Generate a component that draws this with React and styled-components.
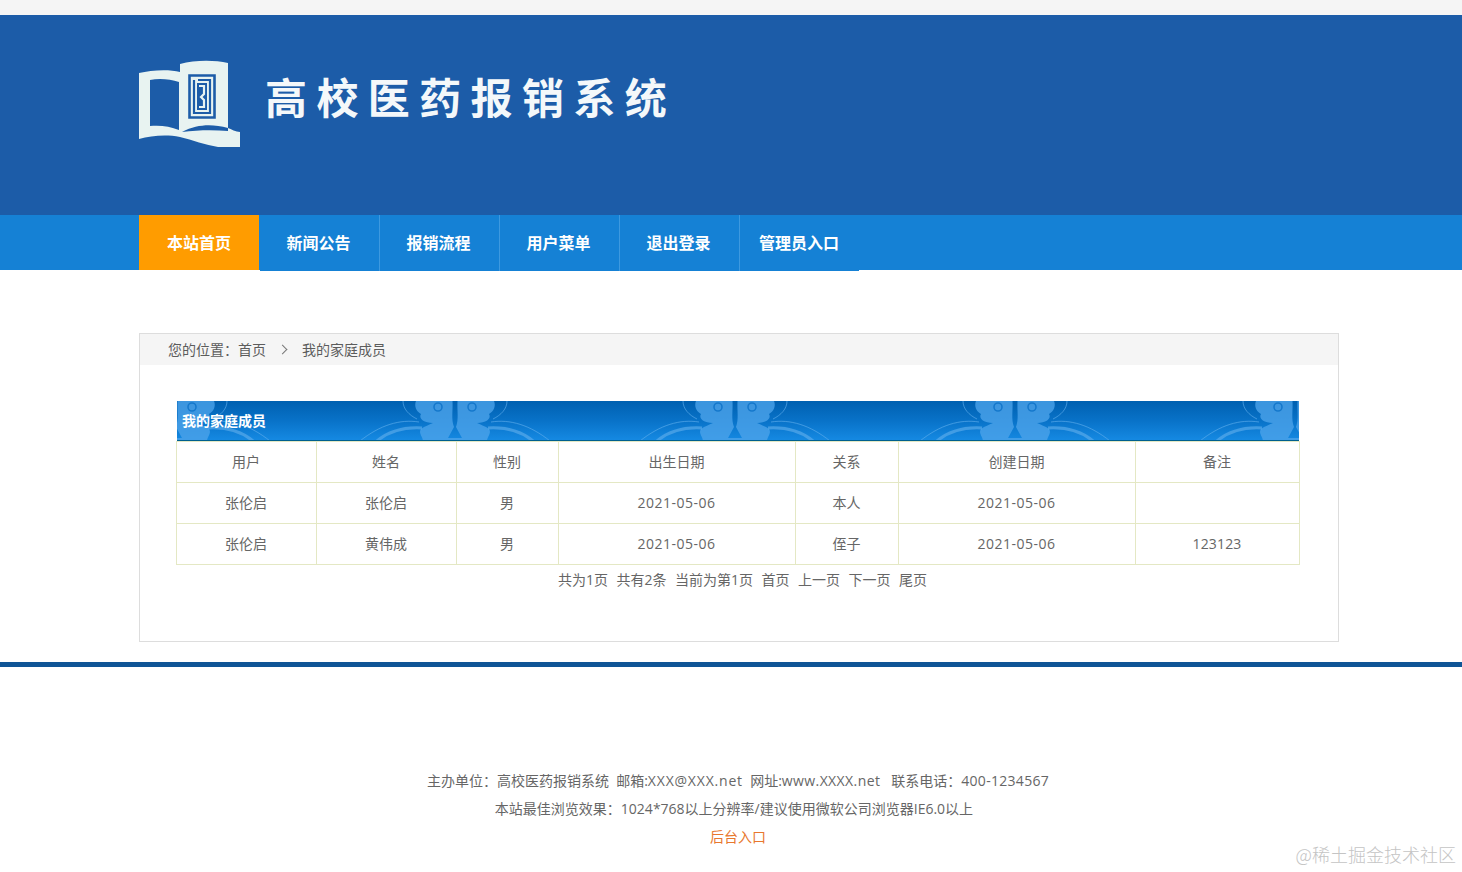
import React from 'react';
import styled, { createGlobalStyle } from 'styled-components';

const GlobalStyle = createGlobalStyle`
  html, body { margin: 0; padding: 0; background: #fff; }
  body {
    font-family: "Open Sans", "Noto Sans CJK SC", sans-serif;
    font-size: 14px;
    color: #666;
  }
`;

const Page = styled.div`
  position: relative;
  height: 872px;
  overflow: hidden;
`;

const TopStrip = styled.div`
  height: 15px;
  background: #f5f5f5;
`;

const Header = styled.header`
  height: 200px;
  background: #1c5ca8;
  padding: 45px 0 0 138px;
  box-sizing: border-box;
  display: flex;
  align-items: flex-start;
`;

const LogoMark = styled.svg`
  width: 102px;
  height: 87px;
  flex: none;
`;

const SiteName = styled.h1`
  margin: 7px 0 0 25px;
  font-family: "Noto Sans CJK SC", sans-serif;
  font-size: 42px;
  line-height: 58px;
  font-weight: 700;
  letter-spacing: 9.4px;
  color: #f4f8fa;
  white-space: nowrap;
`;

const NavBar = styled.nav`
  height: 55px;
  background: #1581d5;
  padding-left: 139px;
  display: flex;
`;

const NavItem = styled.a`
  width: ${(p) => (p.$last ? '119px' : '120px')};
  height: ${(p) => (p.$active ? '55px' : '56px')};
  margin-right: ${(p) => (p.$active ? '1px' : '0')};
  box-sizing: border-box;
  padding: 0 ${(p) => (p.$active ? '0' : p.$last ? '1px' : '2px')} 2px 0;
  display: flex;
  align-items: center;
  justify-content: center;
  font-family: "Noto Sans CJK SC", sans-serif;
  font-size: 16px;
  font-weight: 700;
  color: #fff;
  background: ${(p) => (p.$active ? '#ff9c00' : '#1581d5')};
  border-right: ${(p) => (p.$active || p.$last ? '0' : '1px solid #3d99e0')};
`;

const Panel = styled.section`
  width: 1200px;
  height: 309px;
  box-sizing: border-box;
  margin: 63px 0 0 139px;
  border: 1px solid #ddd;
`;

const Crumbs = styled.div`
  height: 31px;
  background: #f5f5f5;
  padding-left: 28px;
  display: flex;
  align-items: center;
  color: #5c5c5c;
  line-height: 31px;
`;

const CrumbArrow = styled.span`
  display: inline-block;
  width: 6px;
  height: 6px;
  margin: 0 16px 0 13px;
  border-top: 1px solid #777;
  border-right: 1px solid #777;
  transform: rotate(45deg);
`;

const TableWrap = styled.div`
  width: 1124px;
  margin: 36px 0 0 36px;
`;

const TitleBar = styled.div`
  position: relative;
  height: 40px;
  margin: 0 1px;
  box-sizing: border-box;
  background: linear-gradient(#0060b0 0%, #0872c8 50%, #1589e2 100%);
  border-bottom: 1px solid #00608e;
  overflow: hidden;
`;

const TitleOrnament = styled.svg`
  position: absolute;
  left: 0;
  top: 0;
  width: 100%;
  height: 40px;
`;

const TitleText = styled.span`
  position: relative;
  display: block;
  padding: 9px 0 0 5px;
  font-family: "Noto Sans CJK SC", sans-serif;
  font-size: 14px;
  line-height: 20px;
  font-weight: 700;
  color: #fff;
`;

const Grid = styled.table`
  width: 1123px;
  table-layout: fixed;
  border-collapse: collapse;
`;

const Cell = styled.td`
  height: 41px;
  padding: 0 1px 0 0;
  box-sizing: border-box;
  border: 1px solid #e4e8c4;
  text-align: center;
  color: #666;
  font-size: 14px;
  line-height: 20px;
  letter-spacing: ${(p) => p.$spacing || 0}px;
`;

const Pager = styled.div`
  display: flex;
  justify-content: center;
  gap: 8.5px;
  padding: 5px 0 0 9px;
  line-height: 20px;
  color: #666;
`;

const Rule = styled.div`
  height: 5px;
  margin-top: 20px;
  background: #0f5596;
`;

const Footer = styled.footer`
  padding: 100px 0 0 14px;
  text-align: center;
  line-height: 28px;
  color: #666;
`;

const FootLine = styled.div`
  margin-left: ${(p) => p.$shift || 0}px;
  white-space: pre;
`;

const Latin = styled.span`
  letter-spacing: ${(p) => p.$spacing}px;
`;

const AdminLink = styled.a`
  color: #e8772e;
`;

const Watermark = styled.div`
  position: absolute;
  right: 6px;
  bottom: 6px;
  font-family: "Noto Sans CJK SC", sans-serif;
  font-size: 18px;
  line-height: 24px;
  font-weight: 300;
  color: #c4c4c4;
`;

const navItems = ['本站首页', '新闻公告', '报销流程', '用户菜单', '退出登录', '管理员入口'];
const columns = [140, 140, 102, 237, 103, 237, 164];
const headers = ['用户', '姓名', '性别', '出生日期', '关系', '创建日期', '备注'];
const rows = [
  ['张伦启', '张伦启', '男', '2021-05-06', '本人', '2021-05-06', ''],
  ['张伦启', '黄伟成', '男', '2021-05-06', '侄子', '2021-05-06', '123123'],
];
const pager = ['共为1页', '共有2条', '当前为第1页', '首页', '上一页', '下一页', '尾页'];

// dates and numbers run a little wider in the reference font
const cellSpacing = (text) => {
  if (text.includes('-')) return 0.5;
  if (/^\d+$/.test(text)) return 0.15;
  return 0;
};

function Logo() {
  return (
    <LogoMark viewBox="0 0 102 87">
      <path
        fill="#e8f3f1"
        fillRule="evenodd"
        d="M1 13C13 10 31 9 42 12L42 4C57 0 76 0 90 3L90 68C93 69 98 72 102 72L102 87C82 91 62 82 42 77C27 74 13 76 1 79ZM12 20L12 66C21 65 32 66 41 70L41 22C32 19 21 18 12 20Z"
      />
      <path fill="#1c5ca8" d="M44 72C60 64 74 64 90 68L90 71C76 70 60 70 44 72Z" />
      <g fill="none" stroke="#1c5ca8">
        <path strokeWidth="2.6" d="M51.5 15.5H76.5V57.5H51.5Z" />
        <path strokeWidth="2.2" d="M56 20V53H72V20H60" />
      </g>
      <path fill="#1c5ca8" d="M59 23H69V50H59Z" />
      <path fill="none" stroke="#e8f3f1" strokeWidth="2.2" d="M61 26H66V34L63 37L66 40V47H61" />
    </LogoMark>
  );
}

// left half of the scroll, drawn around x = 0 and mirrored for the right half
function ScrollHalf({ transform }) {
  return (
    <g transform={transform}>
      <path
        fill="#4ba3ea"
        fillOpacity="0.8"
        d="M-2.5 0C-2 10-4 18-1 26L-7 37H0V40H-32C-32 36-37 32-34 28C-30 25-26 24-22 22C-30 22-37 18-34 13C-39 10-41 5-39 0Z"
      />
      <circle cx="-17" cy="6" r="4" fill="none" stroke="#1478cc" strokeWidth="1.6" />
      <g fill="none" stroke="#5cacec" strokeOpacity="0.65">
        <path d="M-33 27C-50 26-66 30-78 40" strokeWidth="3" />
        <path d="M-36 21C-55 18-75 24-95 40" strokeWidth="1" />
        <path d="M-52 0C-52 8-46 14-38 18" strokeWidth="1" />
      </g>
    </g>
  );
}

function TitlePattern() {
  return (
    <TitleOrnament>
      <defs>
        <pattern id="scroll" width="280" height="40" patternUnits="userSpaceOnUse" patternTransform="translate(-142 0)">
          <ScrollHalf transform="translate(140 0)" />
          <ScrollHalf transform="translate(140 0) scale(-1 1)" />
        </pattern>
      </defs>
      <rect width="100%" height="40" fill="url(#scroll)" />
    </TitleOrnament>
  );
}

export default function App() {
  return (
    <Page>
      <GlobalStyle />
      <TopStrip />
      <Header>
        <Logo />
        <SiteName>高校医药报销系统</SiteName>
      </Header>
      <NavBar>
        {navItems.map((item, i) => (
          <NavItem key={item} $active={i === 0} $last={i === navItems.length - 1}>
            {item}
          </NavItem>
        ))}
      </NavBar>
      <Panel>
        <Crumbs>
          您的位置：首页
          <CrumbArrow />
          我的家庭成员
        </Crumbs>
        <TableWrap>
          <TitleBar>
            <TitlePattern />
            <TitleText>我的家庭成员</TitleText>
          </TitleBar>
          <Grid>
            <colgroup>
              {columns.map((w, i) => (
                <col key={i} width={w} />
              ))}
            </colgroup>
            <tbody>
              <tr>
                {headers.map((h) => (
                  <Cell key={h}>{h}</Cell>
                ))}
              </tr>
              {rows.map((row, r) => (
                <tr key={r}>
                  {row.map((c, i) => (
                    <Cell key={i} $spacing={cellSpacing(c)}>{c}</Cell>
                  ))}
                </tr>
              ))}
            </tbody>
          </Grid>
          <Pager>
            {pager.map((p) => (
              <span key={p}>{p}</span>
            ))}
          </Pager>
        </TableWrap>
      </Panel>
      <Rule />
      <Footer>
        <FootLine>
          主办单位：高校医药报销系统  邮箱:<Latin $spacing={0.8}>XXX@XXX.net</Latin>  网址:
          <Latin $spacing={0.4}>www.XXXX.net</Latin>   联系电话：<Latin $spacing={0.3}>400-1234567</Latin>
        </FootLine>
        <FootLine $shift={-8}>本站最佳浏览效果：1024*768以上分辨率/建议使用微软公司浏览器IE6.0以上</FootLine>
        <FootLine>
          <AdminLink>后台入口</AdminLink>
        </FootLine>
      </Footer>
      <Watermark>@稀土掘金技术社区</Watermark>
    </Page>
  );
}
